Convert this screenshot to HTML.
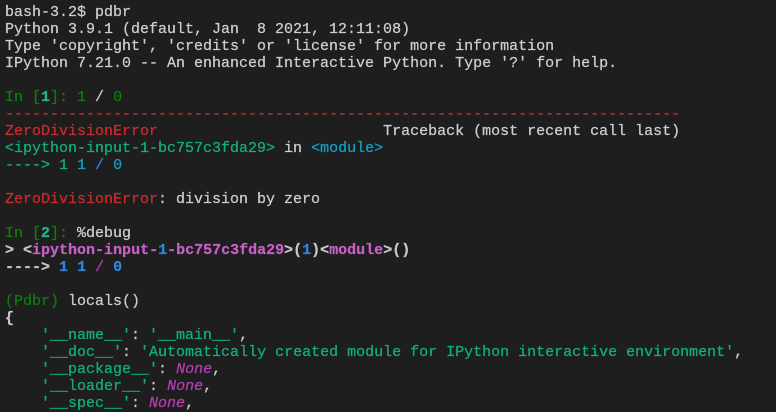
<!DOCTYPE html>
<html>
<head>
<meta charset="utf-8">
<style>
html,body{margin:0;padding:0;background:#1e1e1e;width:776px;height:410px;overflow:hidden}
pre{margin:0;position:absolute;left:5px;top:4px;font-family:"Liberation Mono",monospace;font-size:15px;line-height:17px;color:#cecece;white-space:pre;-webkit-text-stroke:0.25px currentColor;filter:blur(0.3px)}
.g{color:#0b7d0b}
.gb{color:#1fb88a;font-weight:bold}
.r{color:#cf2a2a}
.t{color:#10b07c}
.c{color:#12a0c8}
.bl{color:#2f86dc}
.blb{color:#2f86dc;font-weight:bold}
.m{color:#c85fc8;font-weight:bold}
.n{color:#b53db5;font-style:italic}
.w{color:#c8c8c8;font-weight:bold}
</style>
</head>
<body>
<pre>bash-3.2$ pdbr
Python 3.9.1 (default, Jan  8 2021, 12:11:08)
Type 'copyright', 'credits' or 'license' for more information
IPython 7.21.0 -- An enhanced Interactive Python. Type '?' for help.

<span class="g">In [</span><span class="gb">1</span><span class="g">]: 1 </span>/<span class="g"> 0</span>
<span class="r">---------------------------------------------------------------------------</span>
<span class="r">ZeroDivisionError</span>                         Traceback (most recent call last)
<span class="t">&lt;ipython-input-1-bc757c3fda29&gt;</span> in <span class="c">&lt;module&gt;</span>
<span class="t">----&gt; 1</span> <span class="c">1</span> <span class="bl">/</span> <span class="c">0</span>

<span class="r">ZeroDivisionError</span>: division by zero

<span class="g">In [</span><span class="gb">2</span><span class="g">]: </span>%debug
<span class="w">&gt;</span> <span class="w">&lt;</span><span class="m">ipython-input-</span><span class="blb">1</span><span class="m">-bc757c3fda29</span><span class="w">&gt;(</span><span class="blb">1</span><span class="w">)&lt;</span><span class="m">module</span><span class="w">&gt;()</span>
<span class="w">----&gt;</span> <span class="blb">1</span> <span class="blb">1</span> <span class="n" style="font-style:normal">/</span> <span class="blb">0</span>

<span class="g">(Pdbr)</span> locals()
<span class="w">{</span>
    <span class="t">'__name__'</span>: <span class="t">'__main__'</span>,
    <span class="t">'__doc__'</span>: <span class="t">'Automatically created module for IPython interactive environment'</span>,
    <span class="t">'__package__'</span>: <span class="n">None</span>,
    <span class="t">'__loader__'</span>: <span class="n">None</span>,
    <span class="t">'__spec__'</span>: <span class="n">None</span>,
</pre>
</body>
</html>
